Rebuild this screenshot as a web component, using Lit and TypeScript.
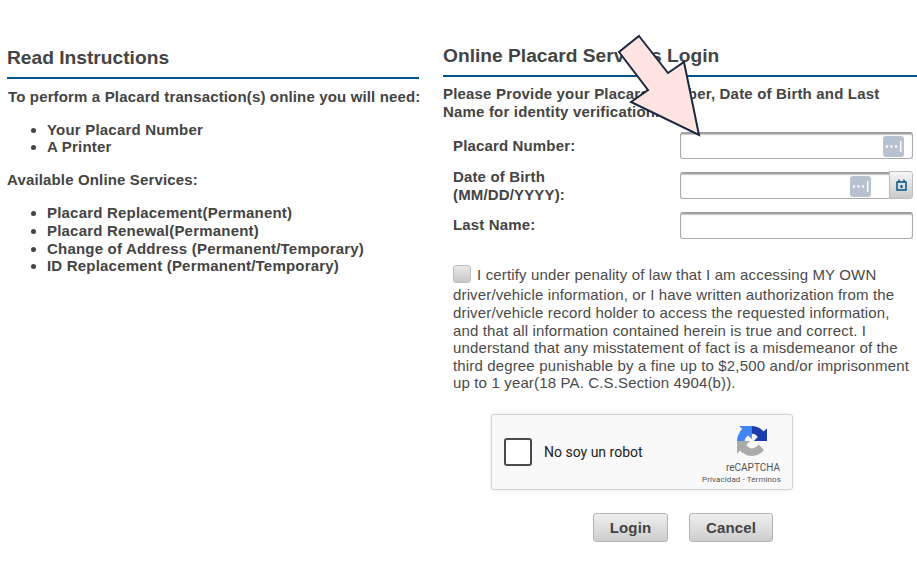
import { LitElement, html, css, svg } from 'lit';
import { customElement } from 'lit/decorators.js';

const keyIcon = html`<span class="key"><svg width="21" height="21" viewBox="0 0 21 21">
    <circle cx="4" cy="10.5" r="1.2" fill="#fff"></circle>
    <circle cx="8.5" cy="10.5" r="1.2" fill="#fff"></circle>
    <circle cx="13" cy="10.5" r="1.2" fill="#fff"></circle>
    <rect x="17" y="5" width="1.4" height="11" fill="#fff"></rect>
</svg></span>`;

const arrow = svg`<path d="M639 36 L668 73 L684 62 L699 135 L631 102 L648 90 L619 52 Z" fill="#ffe4e1" stroke="#1b2a41" stroke-width="2"></path>`;

@customElement('app-root')
export class AppRoot extends LitElement {
    public static override styles = css`
        :host {
            display: block;
            position: relative;
            width: 917px;
            height: 561px;
            overflow: hidden;
            background: #fff;
            font-family: 'Liberation Sans', Arial, sans-serif;
            color: #444;
            font-size: 15px;
            line-height: 17.6px;
            letter-spacing: 0.15px;
        }
        .page {
            display: flex;
            align-items: flex-start;
        }
        .left {
            width: 412px;
            margin: 47px 0 0 7px;
        }
        .right {
            width: 474px;
            margin: 45px 0 0 24px;
        }
        h2 {
            margin: 0;
            font-size: 19.2px;
            line-height: 21px;
            letter-spacing: 0;
            font-weight: bold;
            padding-bottom: 9px;
            border-bottom: 2px solid #00558c;
        }
        .need {
            margin: 9px 0 15px 1px;
            font-weight: bold;
            white-space: nowrap;
        }
        .sub {
            margin: 15px 0 16px;
            font-weight: bold;
        }
        ul {
            margin: 0;
            padding: 0 0 0 40px;
            font-weight: bold;
            letter-spacing: 0.2px;
        }
        .intro {
            margin: 8px 0 0;
            font-weight: bold;
            letter-spacing: 0.18px;
        }
        .form {
            display: grid;
            grid-template-columns: 227px 233px;
            row-gap: 8.8px;
            margin: 12px 0 0 10px;
            align-items: center;
        }
        .form label {
            font-weight: bold;
        }
        .form label.last {
            padding-bottom: 1px;
        }
        .field {
            display: flex;
            height: 27px;
        }
        .box {
            flex: 1;
            position: relative;
            box-sizing: border-box;
            height: 27px;
            border: 1px solid #aaa;
            border-top: 2px solid #a0a0a0;
            border-radius: 3px;
            background: #fff;
            box-shadow: inset 0 1px 1px #c8c8c8;
        }
        .joined .box {
            border-radius: 3px 0 0 3px;
            border-right: none;
        }
        .key {
            position: absolute;
            right: 8px;
            top: 2px;
            width: 21px;
            height: 21px;
            border-radius: 3px;
            background: #b8c1cf;
        }
        .key svg {
            display: block;
        }
        .joined .key {
            right: 18px;
        }
        .cal {
            width: 24px;
            height: 28px;
            margin-top: -1px;
            box-sizing: border-box;
            border: 1px solid #bdbdbd;
            border-radius: 0 3px 3px 0;
            background: linear-gradient(#f6f6f6, #c9c9c9);
            display: flex;
            align-items: center;
            justify-content: center;
        }
        .cert {
            margin: 26.4px 0 0 10px;
            width: 462px;
            color: #4a4a4a;
        }
        .check {
            display: inline-block;
            box-sizing: border-box;
            width: 18px;
            height: 18px;
            margin: 0 6px 3px 0;
            vertical-align: -6px;
            border: 1px solid #bdbdbd;
            border-radius: 3px;
            background: linear-gradient(#e9e9e9, #c8c8c8);
        }
        .captcha {
            box-sizing: border-box;
            display: flex;
            align-items: center;
            width: 302px;
            height: 76px;
            margin: 21.6px 0 0 48px;
            padding: 0 12px;
            background: #f9f9f9;
            border: 1px solid #d3d3d3;
            border-radius: 3px;
            box-shadow: 0 0 4px rgba(0, 0, 0, 0.08);
            font-family: Roboto, sans-serif;
            letter-spacing: 0;
        }
        .tick {
            box-sizing: border-box;
            width: 28px;
            height: 28px;
            border: 2px solid #4a4a4a;
            border-radius: 3px;
            background: #fff;
        }
        .robot {
            margin-left: 12px;
            padding-top: 2px;
            font-size: 14px;
            color: #222;
            flex: 1;
        }
        .brand {
            display: flex;
            flex-direction: column;
            align-items: flex-end;
            margin-right: -1px;
            padding-top: 8px;
            color: #555;
        }
        .brand svg {
            display: block;
            margin-right: 14px;
        }
        .brand .name {
            font-size: 10px;
            line-height: 12px;
            margin: 6px 1px 0 0;
        }
        .brand .terms {
            font-size: 8px;
            line-height: 10px;
            margin-top: 1px;
            letter-spacing: 0.1px;
            white-space: nowrap;
        }
        .actions {
            display: flex;
            gap: 21px;
            margin: 23px 0 0 150px;
        }
        button {
            height: 29px;
            padding: 0;
            font: bold 15px 'Liberation Sans', Arial, sans-serif;
            letter-spacing: 0.15px;
            color: #444;
            border: 1px solid #b5b5b5;
            border-radius: 3px;
            background: linear-gradient(#efefef, #cdcdcd);
        }
        .login {
            width: 75px;
        }
        .cancel {
            width: 84px;
        }
        .pointer {
            position: absolute;
            left: 0;
            top: 0;
            pointer-events: none;
        }
    `;

    override render() {
        return html`
            <div class="page">
                <section class="left">
                    <h2>Read Instructions</h2>
                    <p class="need">To perform a Placard transaction(s) online you will need:</p>
                    <ul>
                        <li>Your Placard Number</li>
                        <li>A Printer</li>
                    </ul>
                    <p class="sub">Available Online Services:</p>
                    <ul>
                        <li>Placard Replacement(Permanent)</li>
                        <li>Placard Renewal(Permanent)</li>
                        <li>Change of Address (Permanent/Temporary)</li>
                        <li>ID Replacement (Permanent/Temporary)</li>
                    </ul>
                </section>
                <section class="right">
                    <h2>Online Placard Services Login</h2>
                    <p class="intro">
                        Please Provide your Placard Number, Date of Birth and Last<br />
                        Name for identity verification.
                    </p>
                    <div class="form">
                        <label>Placard Number:</label>
                        <div class="field"><div class="box">${keyIcon}</div></div>
                        <label>Date of Birth<br />(MM/DD/YYYY):</label>
                        <div class="field joined">
                            <div class="box">${keyIcon}</div>
                            <div class="cal">
                                <svg width="11" height="12" viewBox="0 0 11 12">
                                    <path d="M1 3h9v8H1z" fill="none" stroke="#00558c" stroke-width="1.5"></path>
                                    <path d="M3 .5v2.5M8 .5v2.5" stroke="#00558c" stroke-width="1.5"></path>
                                    <rect x="4.5" y="6" width="2" height="3" fill="#00558c"></rect>
                                </svg>
                            </div>
                        </div>
                        <label class="last">Last Name:</label>
                        <div class="field"><div class="box"></div></div>
                    </div>
                    <div class="cert">
                        <span class="check"></span>I certify under penality of law that I am accessing MY OWN
                        driver/vehicle information, or I have written authorization from the
                        driver/vehicle record holder to access the requested information,
                        and that all information contained herein is true and correct. I
                        understand that any misstatement of fact is a misdemeanor of the
                        third degree punishable by a fine up to $2,500 and/or imprisonment
                        up to 1 year(18 PA. C.S.Section 4904(b)).
                    </div>
                    <div class="captcha">
                        <div class="tick"></div>
                        <div class="robot">No soy un robot</div>
                        <div class="brand">
                            <svg width="30" height="30" viewBox="0 0 64 64">
                                <path d="M64 32l-.034-1.368V4.76l-7.23 7.23C50.817 4.749 41.886.116 31.88.116 21.468.116 12.218 5.133 6.37 12.902l11.852 11.976c1.161-2.148 2.811-3.993 4.8-5.384 2.07-1.615 5-2.935 8.858-2.935.466 0 .826.054 1.09.156 4.783.378 8.928 3.017 11.37 6.847l-8.39 8.39c10.626-.042 22.63-.066 28.05.046z" fill="#1c3aa9"></path>
                                <path d="M31.875.002l-1.368.034H4.64l7.23 7.23C4.63 13.183-.003 22.114-.003 32.12c0 10.412 5.017 19.662 12.786 25.51l11.976-11.852c-2.148-1.161-3.993-2.811-5.384-4.8-1.615-2.07-2.935-5-2.935-8.858 0-.466.054-.826.156-1.09.378-4.783 3.017-8.928 6.847-11.37l8.39 8.39c-.042-10.626-.066-22.63.046-28.05z" fill="#4285f4"></path>
                                <path d="M.002 32.002l.034 1.368v25.87l7.23-7.23c5.917 7.241 14.848 11.874 24.854 11.874 10.412 0 19.662-5.017 25.51-12.786L45.754 39.122c-1.161 2.148-2.811 3.993-4.8 5.384-2.07 1.615-5 2.935-8.858 2.935-.466 0-.826-.054-1.09-.156-4.783-.378-8.928-3.017-11.37-6.847l8.39-8.39c-10.626.042-22.63.066-28.05-.046z" fill="#ababab"></path>
                            </svg>
                            <div class="name">reCAPTCHA</div>
                            <div class="terms">Privacidad - Términos</div>
                        </div>
                    </div>
                    <div class="actions">
                        <button class="login">Login</button>
                        <button class="cancel">Cancel</button>
                    </div>
                </section>
            </div>
            <svg class="pointer" width="917" height="561" viewBox="0 0 917 561">${arrow}</svg>
        `;
    }
}
